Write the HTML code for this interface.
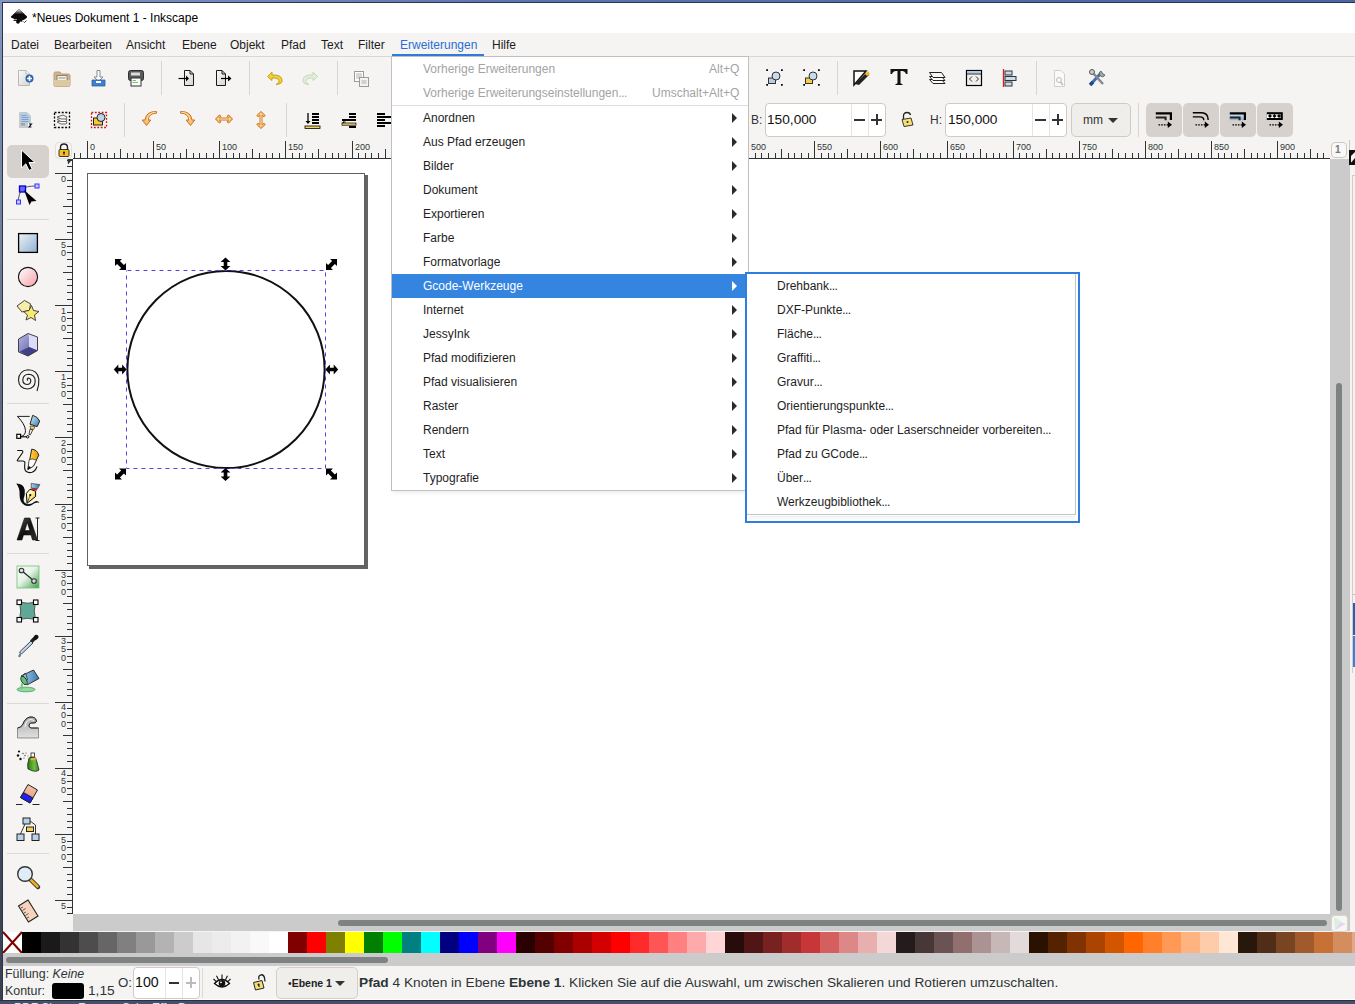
<!DOCTYPE html><html><head><meta charset="utf-8"><style>
*{margin:0;padding:0;box-sizing:border-box}
html,body{width:1355px;height:1004px;overflow:hidden;background:linear-gradient(#7d92bd,#5a6680 40%,#3b4252);font-family:"Liberation Sans",sans-serif;font-size:12px;color:#000}
.a{position:absolute}
.t{position:absolute;white-space:nowrap;line-height:1}
.mi{position:absolute;top:39px;font-size:12px;color:#1c1c1c;white-space:nowrap;line-height:1}
.sep{position:absolute;width:1px;background:#d8d5d0}
.it{position:absolute;font-size:12px;color:#1e1e1e;white-space:nowrap;line-height:1}
.dis{color:#a3a3a3}
.arr{position:absolute;width:0;height:0;border-top:5px solid transparent;border-bottom:5px solid transparent;border-left:5px solid #2b2b2b}
.sw{position:absolute;top:932px;height:21px;width:19px}
.spin{position:absolute;background:#fff;border:1px solid #cfcac5;border-radius:4px}
.btn{position:absolute;background:#d6d1cc;border-radius:5px}
.rl{position:absolute;font-size:9px;color:#2e3436;line-height:1;white-space:nowrap}
svg{position:absolute;overflow:visible}
</style></head><body>
<div class="a" style="left:0;top:0;width:1355px;height:2px;background:linear-gradient(90deg,#8196c2,#5a74b0 40%,#4a64a4)"></div>
<div class="a" style="left:0;top:0;width:2px;height:1004px;background:linear-gradient(#8196c2,#6a7890 30%,#4a5468 60%,#3a4250)"></div>
<div class="a" style="left:2px;top:2px;width:1353px;height:997px;background:#2c3448"></div>
<div class="a" style="left:3px;top:3px;width:1352px;height:996px;background:#f5f4f2"></div>
<div class="a" style="left:3px;top:3px;width:1352px;height:30px;background:#fff"></div>
<div class="t" style="left:32px;top:12px;font-size:12px;color:#000">*Neues Dokument 1 - Inkscape</div>
<div class="a" style="left:3px;top:56px;width:1352px;height:1px;background:#d9d7d3"></div>
<div class="mi" style="left:11px">Datei</div>
<div class="mi" style="left:54px">Bearbeiten</div>
<div class="mi" style="left:126px">Ansicht</div>
<div class="mi" style="left:182px">Ebene</div>
<div class="mi" style="left:230px">Objekt</div>
<div class="mi" style="left:281px">Pfad</div>
<div class="mi" style="left:321px">Text</div>
<div class="mi" style="left:358px">Filter</div>
<div class="mi" style="left:492px">Hilfe</div>
<div class="mi" style="left:400px;color:#2a6fd6">Erweiterungen</div>
<div class="a" style="left:392px;top:54px;width:92px;height:3px;background:#2e7bd8"></div>
<div class="sep" style="left:161px;top:61px;height:34px"></div>
<div class="sep" style="left:249px;top:61px;height:34px"></div>
<div class="sep" style="left:337px;top:61px;height:34px"></div>
<div class="sep" style="left:837px;top:61px;height:34px"></div>
<div class="sep" style="left:1036px;top:61px;height:34px"></div>
<div class="sep" style="left:124px;top:103px;height:34px"></div>
<div class="sep" style="left:286px;top:103px;height:34px"></div>
<div class="sep" style="left:1138px;top:103px;height:34px"></div>
<div class="sep" style="left:3px;top:98px;width:0"></div>
<div class="a" style="left:73px;top:159px;width:1257px;height:755px;background:#fff"></div>
<div class="a" style="left:89px;top:175px;width:279px;height:394px;background:#646464"></div>
<div class="a" style="left:87px;top:173px;width:278px;height:393px;background:#fff;border:1px solid #616161"></div>
<div class="a" style="left:73px;top:140px;width:1257px;height:19px;background:#f5f4f2"></div>
<div class="a" style="left:55px;top:159px;width:18px;height:755px;background:#f5f4f2"></div>
<svg style="left:0;top:0" width="1355" height="1004"><path d="M74.5 153V158M80.5 153V158M87.5 141V158M94.5 153V158M100.5 153V158M107.5 153V158M114.5 153V158M120.5 149V158M127.5 153V158M133.5 153V158M140.5 153V158M147.5 153V158M153.5 141V158M160.5 153V158M166.5 153V158M173.5 153V158M180.5 153V158M186.5 149V158M193.5 153V158M199.5 153V158M206.5 153V158M213.5 153V158M219.5 141V158M226.5 153V158M233.5 153V158M239.5 153V158M246.5 153V158M252.5 149V158M259.5 153V158M266.5 153V158M272.5 153V158M279.5 153V158M285.5 141V158M292.5 153V158M299.5 153V158M305.5 153V158M312.5 153V158M318.5 149V158M325.5 153V158M332.5 153V158M338.5 153V158M345.5 153V158M352.5 141V158M358.5 153V158M365.5 153V158M371.5 153V158M378.5 153V158M385.5 149V158M391.5 153V158M398.5 153V158M404.5 153V158M411.5 153V158M418.5 141V158M424.5 153V158M431.5 153V158M437.5 153V158M444.5 153V158M451.5 149V158M457.5 153V158M464.5 153V158M471.5 153V158M477.5 153V158M484.5 141V158M490.5 153V158M497.5 153V158M504.5 153V158M510.5 153V158M517.5 149V158M523.5 153V158M530.5 153V158M537.5 153V158M543.5 153V158M550.5 141V158M556.5 153V158M563.5 153V158M570.5 153V158M576.5 153V158M583.5 149V158M590.5 153V158M596.5 153V158M603.5 153V158M609.5 153V158M616.5 141V158M623.5 153V158M629.5 153V158M636.5 153V158M642.5 153V158M649.5 149V158M656.5 153V158M662.5 153V158M669.5 153V158M675.5 153V158M682.5 141V158M689.5 153V158M695.5 153V158M702.5 153V158M709.5 153V158M715.5 149V158M722.5 153V158M728.5 153V158M735.5 153V158M742.5 153V158M748.5 141V158M755.5 153V158M761.5 153V158M768.5 153V158M775.5 153V158M781.5 149V158M788.5 153V158M794.5 153V158M801.5 153V158M808.5 153V158M814.5 141V158M821.5 153V158M828.5 153V158M834.5 153V158M841.5 153V158M847.5 149V158M854.5 153V158M861.5 153V158M867.5 153V158M874.5 153V158M880.5 141V158M887.5 153V158M894.5 153V158M900.5 153V158M907.5 153V158M913.5 149V158M920.5 153V158M927.5 153V158M933.5 153V158M940.5 153V158M947.5 141V158M953.5 153V158M960.5 153V158M966.5 153V158M973.5 153V158M980.5 149V158M986.5 153V158M993.5 153V158M999.5 153V158M1006.5 153V158M1013.5 141V158M1019.5 153V158M1026.5 153V158M1032.5 153V158M1039.5 153V158M1046.5 149V158M1052.5 153V158M1059.5 153V158M1066.5 153V158M1072.5 153V158M1079.5 141V158M1085.5 153V158M1092.5 153V158M1099.5 153V158M1105.5 153V158M1112.5 149V158M1118.5 153V158M1125.5 153V158M1132.5 153V158M1138.5 153V158M1145.5 141V158M1151.5 153V158M1158.5 153V158M1165.5 153V158M1171.5 153V158M1178.5 149V158M1185.5 153V158M1191.5 153V158M1198.5 153V158M1204.5 153V158M1211.5 141V158M1218.5 153V158M1224.5 153V158M1231.5 153V158M1237.5 153V158M1244.5 149V158M1251.5 153V158M1257.5 153V158M1264.5 153V158M1270.5 153V158M1277.5 141V158M1284.5 153V158M1290.5 153V158M1297.5 153V158M1304.5 153V158M1310.5 149V158M1317.5 153V158M1323.5 153V158M73 158.5H1330" stroke="#2e3436" stroke-width="1" fill="none"/></svg>
<div class="rl" style="left:90px;top:143px">0</div>
<div class="rl" style="left:156px;top:143px">50</div>
<div class="rl" style="left:222px;top:143px">100</div>
<div class="rl" style="left:288px;top:143px">150</div>
<div class="rl" style="left:355px;top:143px">200</div>
<div class="rl" style="left:421px;top:143px">250</div>
<div class="rl" style="left:487px;top:143px">300</div>
<div class="rl" style="left:553px;top:143px">350</div>
<div class="rl" style="left:619px;top:143px">400</div>
<div class="rl" style="left:685px;top:143px">450</div>
<div class="rl" style="left:751px;top:143px">500</div>
<div class="rl" style="left:817px;top:143px">550</div>
<div class="rl" style="left:883px;top:143px">600</div>
<div class="rl" style="left:950px;top:143px">650</div>
<div class="rl" style="left:1016px;top:143px">700</div>
<div class="rl" style="left:1082px;top:143px">750</div>
<div class="rl" style="left:1148px;top:143px">800</div>
<div class="rl" style="left:1214px;top:143px">850</div>
<div class="rl" style="left:1280px;top:143px">900</div>
<svg style="left:0;top:0" width="1355" height="1004"><path d="M67 160.5H72M67 166.5H72M55 173.5H72M67 180.5H72M67 186.5H72M67 193.5H72M67 199.5H72M63 206.5H72M67 213.5H72M67 219.5H72M67 226.5H72M67 232.5H72M55 239.5H72M67 246.5H72M67 252.5H72M67 259.5H72M67 266.5H72M63 272.5H72M67 279.5H72M67 285.5H72M67 292.5H72M67 299.5H72M55 305.5H72M67 312.5H72M67 318.5H72M67 325.5H72M67 332.5H72M63 338.5H72M67 345.5H72M67 351.5H72M67 358.5H72M67 365.5H72M55 371.5H72M67 378.5H72M67 385.5H72M67 391.5H72M67 398.5H72M63 404.5H72M67 411.5H72M67 418.5H72M67 424.5H72M67 431.5H72M55 437.5H72M67 444.5H72M67 451.5H72M67 457.5H72M67 464.5H72M63 470.5H72M67 477.5H72M67 484.5H72M67 490.5H72M67 497.5H72M55 504.5H72M67 510.5H72M67 517.5H72M67 523.5H72M67 530.5H72M63 537.5H72M67 543.5H72M67 550.5H72M67 556.5H72M67 563.5H72M55 570.5H72M67 576.5H72M67 583.5H72M67 589.5H72M67 596.5H72M63 603.5H72M67 609.5H72M67 616.5H72M67 623.5H72M67 629.5H72M55 636.5H72M67 642.5H72M67 649.5H72M67 656.5H72M67 662.5H72M63 669.5H72M67 675.5H72M67 682.5H72M67 689.5H72M67 695.5H72M55 702.5H72M67 708.5H72M67 715.5H72M67 722.5H72M67 728.5H72M63 735.5H72M67 742.5H72M67 748.5H72M67 755.5H72M67 761.5H72M55 768.5H72M67 775.5H72M67 781.5H72M67 788.5H72M67 794.5H72M63 801.5H72M67 808.5H72M67 814.5H72M67 821.5H72M67 827.5H72M55 834.5H72M67 841.5H72M67 847.5H72M67 854.5H72M67 861.5H72M63 867.5H72M67 874.5H72M67 880.5H72M67 887.5H72M67 894.5H72M55 900.5H72M67 907.5H72M67 913.5H72M72.5 159V914" stroke="#2e3436" stroke-width="1" fill="none"/></svg>
<div class="rl" style="left:61px;top:175.0px;font-size:9px;line-height:8px">0</div>
<div class="rl" style="left:61px;top:241.0px;font-size:9px;line-height:8px">5</div>
<div class="rl" style="left:61px;top:249.4px;font-size:9px;line-height:8px">0</div>
<div class="rl" style="left:61px;top:307.0px;font-size:9px;line-height:8px">1</div>
<div class="rl" style="left:61px;top:315.4px;font-size:9px;line-height:8px">0</div>
<div class="rl" style="left:61px;top:323.8px;font-size:9px;line-height:8px">0</div>
<div class="rl" style="left:61px;top:373.0px;font-size:9px;line-height:8px">1</div>
<div class="rl" style="left:61px;top:381.4px;font-size:9px;line-height:8px">5</div>
<div class="rl" style="left:61px;top:389.8px;font-size:9px;line-height:8px">0</div>
<div class="rl" style="left:61px;top:439.0px;font-size:9px;line-height:8px">2</div>
<div class="rl" style="left:61px;top:447.4px;font-size:9px;line-height:8px">0</div>
<div class="rl" style="left:61px;top:455.8px;font-size:9px;line-height:8px">0</div>
<div class="rl" style="left:61px;top:505.0px;font-size:9px;line-height:8px">2</div>
<div class="rl" style="left:61px;top:513.4px;font-size:9px;line-height:8px">5</div>
<div class="rl" style="left:61px;top:521.8px;font-size:9px;line-height:8px">0</div>
<div class="rl" style="left:61px;top:571.0px;font-size:9px;line-height:8px">3</div>
<div class="rl" style="left:61px;top:579.4px;font-size:9px;line-height:8px">0</div>
<div class="rl" style="left:61px;top:587.8px;font-size:9px;line-height:8px">0</div>
<div class="rl" style="left:61px;top:637.0px;font-size:9px;line-height:8px">3</div>
<div class="rl" style="left:61px;top:645.4px;font-size:9px;line-height:8px">5</div>
<div class="rl" style="left:61px;top:653.8px;font-size:9px;line-height:8px">0</div>
<div class="rl" style="left:61px;top:703.0px;font-size:9px;line-height:8px">4</div>
<div class="rl" style="left:61px;top:711.4px;font-size:9px;line-height:8px">0</div>
<div class="rl" style="left:61px;top:719.8px;font-size:9px;line-height:8px">0</div>
<div class="rl" style="left:61px;top:769.0px;font-size:9px;line-height:8px">4</div>
<div class="rl" style="left:61px;top:777.4px;font-size:9px;line-height:8px">5</div>
<div class="rl" style="left:61px;top:785.8px;font-size:9px;line-height:8px">0</div>
<div class="rl" style="left:61px;top:836.0px;font-size:9px;line-height:8px">5</div>
<div class="rl" style="left:61px;top:844.4px;font-size:9px;line-height:8px">0</div>
<div class="rl" style="left:61px;top:852.8px;font-size:9px;line-height:8px">0</div>
<div class="rl" style="left:61px;top:902.0px;font-size:9px;line-height:8px">5</div>
<div class="a" style="left:73px;top:914px;width:1257px;height:17px;background:#cbcbcb"></div>
<div class="a" style="left:338px;top:920px;width:989px;height:6px;background:#7e8283;border-radius:3px"></div>
<div class="a" style="left:1330px;top:159px;width:19px;height:772px;background:#cbcbcb"></div>
<div class="a" style="left:1336px;top:383px;width:6px;height:528px;background:#7e8283;border-radius:3px"></div>
<div class="a" style="left:1330px;top:140px;width:19px;height:19px;background:#f5f4f2"></div>
<div class="a" style="left:1331px;top:142px;width:16px;height:16px;background:#f8f8f7;border:1px solid #cdc8c3;border-radius:4px"></div>
<div class="t" style="left:1335px;top:145px;font-size:10px;color:#777;font-weight:bold">1</div>
<div class="a" style="left:1349px;top:140px;width:6px;height:791px;background:#f5f4f2;border-left:1px solid #cdc8c3"></div>
<svg style="left:1349px;top:150px" width="6" height="16" viewBox="0 0 6 16"><path d="M0 0H6V2L2 6V15H0Z" fill="#111"/><path d="M6 8V15H0Z" fill="#111"/></svg>
<div class="a" style="left:1352px;top:175px;width:3px;height:498px;border-left:1px solid #d0ccc8;border-top:1px solid #d0ccc8"></div>
<div class="a" style="left:1353px;top:594px;width:2px;height:1px;background:#bbb"></div>
<div class="a" style="left:1353px;top:603px;width:2px;height:32px;background:#2a5fb0"></div>
<div class="a" style="left:1353px;top:636px;width:2px;height:31px;background:#3b7fd8"></div>
<svg style="left:1331px;top:915px" width="17" height="17" viewBox="0 0 17 17"><rect x="0.5" y="0.5" width="16" height="16" rx="3" fill="#f7f6f4" stroke="#d8d3ce"/><path d="M3 2L14.5 9L4 15Z" fill="#d8f0e0"/><path d="M4 15L14.5 9L9 8Z" fill="#f0d0f0"/></svg>
<div class="a" style="left:3px;top:932px;width:19px;height:21px;background:#fff"></div>
<svg style="left:3px;top:932px" width="19" height="21"><path d="M0 0L19 21M19 0L0 21" stroke="#800000" stroke-width="2"/></svg>
<div class="sw" style="left:22px;background:#000000"></div>
<div class="sw" style="left:41px;background:#1a1a1a"></div>
<div class="sw" style="left:60px;background:#333333"></div>
<div class="sw" style="left:79px;background:#4d4d4d"></div>
<div class="sw" style="left:98px;background:#666666"></div>
<div class="sw" style="left:117px;background:#808080"></div>
<div class="sw" style="left:136px;background:#999999"></div>
<div class="sw" style="left:155px;background:#b3b3b3"></div>
<div class="sw" style="left:174px;background:#cccccc"></div>
<div class="sw" style="left:193px;background:#e6e6e6"></div>
<div class="sw" style="left:212px;background:#ececec"></div>
<div class="sw" style="left:231px;background:#f2f2f2"></div>
<div class="sw" style="left:250px;background:#f9f9f9"></div>
<div class="sw" style="left:269px;background:#ffffff"></div>
<div class="sw" style="left:288px;background:#800000"></div>
<div class="sw" style="left:307px;background:#ff0000"></div>
<div class="sw" style="left:326px;background:#808000"></div>
<div class="sw" style="left:345px;background:#ffff00"></div>
<div class="sw" style="left:364px;background:#008000"></div>
<div class="sw" style="left:383px;background:#00ff00"></div>
<div class="sw" style="left:402px;background:#008080"></div>
<div class="sw" style="left:421px;background:#00ffff"></div>
<div class="sw" style="left:440px;background:#000080"></div>
<div class="sw" style="left:459px;background:#0000ff"></div>
<div class="sw" style="left:478px;background:#800080"></div>
<div class="sw" style="left:497px;background:#ff00ff"></div>
<div class="sw" style="left:516px;background:#2b0000"></div>
<div class="sw" style="left:535px;background:#550000"></div>
<div class="sw" style="left:554px;background:#800000"></div>
<div class="sw" style="left:573px;background:#aa0000"></div>
<div class="sw" style="left:592px;background:#d40000"></div>
<div class="sw" style="left:611px;background:#ff0000"></div>
<div class="sw" style="left:630px;background:#ff2a2a"></div>
<div class="sw" style="left:649px;background:#ff5555"></div>
<div class="sw" style="left:668px;background:#ff8080"></div>
<div class="sw" style="left:687px;background:#ffaaaa"></div>
<div class="sw" style="left:706px;background:#ffd5d5"></div>
<div class="sw" style="left:725px;background:#280b0b"></div>
<div class="sw" style="left:744px;background:#501616"></div>
<div class="sw" style="left:763px;background:#782121"></div>
<div class="sw" style="left:782px;background:#a02c2c"></div>
<div class="sw" style="left:801px;background:#c83737"></div>
<div class="sw" style="left:820px;background:#d35f5f"></div>
<div class="sw" style="left:839px;background:#de8787"></div>
<div class="sw" style="left:858px;background:#e9afaf"></div>
<div class="sw" style="left:877px;background:#f4d7d7"></div>
<div class="sw" style="left:896px;background:#241c1c"></div>
<div class="sw" style="left:915px;background:#483737"></div>
<div class="sw" style="left:934px;background:#6c5353"></div>
<div class="sw" style="left:953px;background:#916f6f"></div>
<div class="sw" style="left:972px;background:#ac9393"></div>
<div class="sw" style="left:991px;background:#c8b7b7"></div>
<div class="sw" style="left:1010px;background:#e3dbdb"></div>
<div class="sw" style="left:1029px;background:#2b1100"></div>
<div class="sw" style="left:1048px;background:#552200"></div>
<div class="sw" style="left:1067px;background:#803300"></div>
<div class="sw" style="left:1086px;background:#aa4400"></div>
<div class="sw" style="left:1105px;background:#d45500"></div>
<div class="sw" style="left:1124px;background:#ff6600"></div>
<div class="sw" style="left:1143px;background:#ff7f2a"></div>
<div class="sw" style="left:1162px;background:#ff9955"></div>
<div class="sw" style="left:1181px;background:#ffb380"></div>
<div class="sw" style="left:1200px;background:#ffccaa"></div>
<div class="sw" style="left:1219px;background:#ffe6d5"></div>
<div class="sw" style="left:1238px;background:#28170b"></div>
<div class="sw" style="left:1257px;background:#502d16"></div>
<div class="sw" style="left:1276px;background:#784421"></div>
<div class="sw" style="left:1295px;background:#a05a2c"></div>
<div class="sw" style="left:1314px;background:#c87137"></div>
<div class="sw" style="left:1333px;background:#d38d5f"></div>
<div class="sw" style="left:1352px;background:#deaa87"></div>
<div class="a" style="left:3px;top:953px;width:1352px;height:13px;background:#cbcbcb"></div>
<div class="a" style="left:6px;top:957px;width:382px;height:6px;background:#7e8283;border-radius:3px"></div>
<div class="a" style="left:3px;top:966px;width:1352px;height:33px;background:#f5f4f2"></div>
<div class="a" style="left:3px;top:999px;width:1352px;height:1px;background:#fff"></div>
<div class="a" style="left:0;top:1000px;width:1355px;height:1px;background:#2a3040"></div>
<div class="a" style="left:0;top:1001px;width:1355px;height:3px;background:#46506a"></div>
<div class="a" style="left:0;top:1001px;width:260px;height:3px;overflow:hidden"><div class="t" style="left:14px;top:1px;font-size:12px;color:#dde3ee">PDF Sh</div><div class="t" style="left:78px;top:1px;font-size:12px;color:#dde3ee">F</div><div class="t" style="left:122px;top:1px;font-size:12px;color:#dde3ee">Sch</div><div class="t" style="left:152px;top:1px;font-size:12px;color:#dde3ee">Eff</div><div class="t" style="left:178px;top:1px;font-size:12px;color:#dde3ee">Bau</div></div>
<svg style="left:0;top:0" width="0" height="0"><defs><linearGradient id="gb" x1="0" y1="0" x2="1" y2="1"><stop offset="0" stop-color="#eef3f8"/><stop offset="1" stop-color="#8fb0d2"/></linearGradient><linearGradient id="gp" x1="0" y1="0" x2="1" y2="1"><stop offset="0" stop-color="#fff"/><stop offset="1" stop-color="#f5a0a8"/></linearGradient><linearGradient id="gg" x1="0" y1="0" x2="1" y2="1"><stop offset="0" stop-color="#3c9f4a"/><stop offset="1" stop-color="#e8f4e8"/></linearGradient><linearGradient id="gw" x1="0" y1="0" x2="0" y2="1"><stop offset="0" stop-color="#fff"/><stop offset="1" stop-color="#a0a0a0"/></linearGradient><linearGradient id="gpg" x1="0" y1="0" x2="1" y2="1"><stop offset="0" stop-color="#fbfbfb"/><stop offset="1" stop-color="#d4d4d0"/></linearGradient></defs></svg>
<svg style="left:17px;top:69px" width="20" height="20" viewBox="0 0 20 20"><path d="M1.5 1.5H9L12.5 5V16.5H1.5Z" fill="url(#gpg)" stroke="#b8b8b4"/><path d="M9 1.5V5H12.5" fill="#fff" stroke="#b8b8b4"/><circle cx="12.5" cy="9.5" r="4" fill="#2d64b4"/><path d="M12.5 7V12M10 9.5H15" stroke="#fff" stroke-width="1.6"/></svg>
<svg style="left:53px;top:70px" width="20" height="20" viewBox="0 0 20 20"><path d="M1 3.5Q1 2 2.5 2H7L8.5 4H15Q17 4 17 5.5V15Q17 16.5 15.5 16.5H2.5Q1 16.5 1 15Z" fill="#cdb690" stroke="#b89f78"/><rect x="4" y="5.5" width="10" height="6" fill="#f4f1ea" stroke="#7c6f5a" stroke-width=".8"/><path d="M5.5 8H12.5" stroke="#9a9080"/><path d="M1 10H17V15.5Q17 16.5 16 16.5H2Q1 16.5 1 15.5Z" fill="#ddc8a4"/></svg>
<svg style="left:90px;top:69px" width="20" height="20" viewBox="0 0 20 20"><path d="M7 1.5H10V8H13L8.5 12.5L4 8H7Z" fill="#fff" stroke="#8a8a8a"/><path d="M2 11H15V17H2Z" fill="#3f7fd0" stroke="#2d61a8" stroke-width=".8"/><rect x="6" y="12" width="5" height="2" fill="#fff"/></svg>
<svg style="left:127px;top:69px" width="20" height="20" viewBox="0 0 20 20"><rect x="1.5" y="1.5" width="15" height="10" rx="2" fill="#5a5c5c" stroke="#2e3030"/><rect x="4" y="3.5" width="9" height="3" fill="#ddd"/><rect x="4" y="9" width="10" height="8" fill="#fff" stroke="#2e3030"/><path d="M5.5 11.5H9M5.5 13.5H11" stroke="#7abf6a"/></svg>
<svg style="left:178px;top:69px" width="20" height="20" viewBox="0 0 20 20"><path d="M6.5 1.5H12L15.5 5V16.5H6.5Z" fill="url(#gpg)" stroke="#1a1a1a"/><path d="M12 1.5V5H15.5" fill="none" stroke="#1a1a1a"/><path d="M0.5 9.5H10" stroke="#000" stroke-width="1.2"/><path d="M8 6.5L11 9.5L8 12.5Z" fill="#000"/></svg>
<svg style="left:215px;top:69px" width="20" height="20" viewBox="0 0 20 20"><path d="M1.5 1.5H7L10.5 5V16.5H1.5Z" fill="url(#gpg)" stroke="#1a1a1a"/><path d="M7 1.5V5H10.5" fill="none" stroke="#1a1a1a"/><path d="M6 9.5H14" stroke="#000" stroke-width="1.2"/><path d="M13 6.5L16.5 9.5L13 12.5Z" fill="#000"/></svg>
<svg style="left:265px;top:69px" width="20" height="20" viewBox="0 0 20 20"><path d="M7 3L2.5 7.5L7 11.5V9Q13 8.5 14 11.5Q15 14 11 15.5Q18 15 17 10.5Q16 5.5 7 6Z" fill="#f0d040" stroke="#c8a010" stroke-width="1"/></svg>
<svg style="left:302px;top:69px" width="20" height="20" viewBox="0 0 20 20"><path d="M11 3L15.5 7.5L11 11.5V9Q5 8.5 4 11.5Q3 14 7 15.5Q0 15 1 10.5Q2 5.5 11 6Z" fill="#e4eedc" stroke="#c4d8b8" stroke-width="1"/></svg>
<svg style="left:353px;top:70px" width="20" height="20" viewBox="0 0 20 20"><rect x="1.5" y="1.5" width="9" height="10" fill="#fff" stroke="#9a9a9a"/><path d="M3 4H9M3 6H9M3 8H8" stroke="#9a9a9a" stroke-width=".8"/><rect x="6.5" y="7.5" width="9" height="9" fill="#f3f3f3" stroke="#9a9a9a"/><path d="M8.5 11H13.5M8.5 13H13.5" stroke="#9a9a9a" stroke-width=".8"/></svg>
<svg style="left:765px;top:68px" width="20" height="20" viewBox="0 0 20 20"><path d="M2 3V2H3M2 16V17H3M16 2H17V3M17 16V17H16" stroke="#000" stroke-width="1.5"/><rect x="3.5" y="10" width="7" height="5.5" fill="#b8cde4" stroke="#333"/><circle cx="11" cy="8" r="4" fill="#c9dcee" stroke="#333" stroke-width="1"/></svg>
<svg style="left:802px;top:68px" width="20" height="20" viewBox="0 0 20 20"><path d="M2 3V2H3M2 16V17H3M16 2H17V3M17 16V17H16" stroke="#000" stroke-width="1.5"/><rect x="3.5" y="10" width="7" height="5.5" fill="#f4d03e" stroke="#333"/><circle cx="11" cy="8" r="4" fill="#c9dcee" stroke="#333" stroke-width="1"/></svg>
<svg style="left:852px;top:68px" width="20" height="20" viewBox="0 0 20 20"><path d="M2 17V3H14L2 17Z" fill="#fff" stroke="#111" stroke-width="1.5"/><path d="M3 16L14 5L17 7L7 17Z" fill="#222"/><path d="M13 6L16 3L18 6L15 8Z" fill="#f4b81e"/></svg>
<svg style="left:889px;top:67px" width="20" height="20" viewBox="0 0 20 20"><path d="M1.5 2H18.5V7H17Q16 4 13 4H11.5V16Q11.5 17 13.5 17V18H6.5V17Q8.5 17 8.5 16V4H7Q4 4 3 7H1.5Z" fill="#111"/></svg>
<svg style="left:926px;top:68px" width="20" height="20" viewBox="0 0 20 20"><path d="M3.5 11.5L7 15.5H19L15.5 11.5Z" fill="#fff" stroke="#222" stroke-width="1"/><path d="M3.5 8.5L7 12.5H19L15.5 8.5Z" fill="#fff" stroke="#222" stroke-width="1"/><path d="M3.5 4.5L7 9.5H19L15.5 4.5Z" fill="#f6f6f6" stroke="#222" stroke-width="1"/></svg>
<svg style="left:963px;top:68px" width="20" height="20" viewBox="0 0 20 20"><rect x="3.5" y="2.5" width="15" height="15" fill="#f0efea" stroke="#000" stroke-width="1.2"/><rect x="4.2" y="3.2" width="13.6" height="2.3" fill="#a8c8ec"/><path d="M4 6H18" stroke="#000" stroke-width=".8"/><path d="M9 8.5L6.5 11L9 13.5M13 8.5L15.5 11L13 13.5" fill="none" stroke="#333" stroke-width="1"/></svg>
<svg style="left:1000px;top:68px" width="20" height="20" viewBox="0 0 20 20"><path d="M3.5 1V19" stroke="#d02020" stroke-width="1.3"/><rect x="5" y="3" width="7" height="4" fill="#c9dcee" stroke="#333"/><rect x="5" y="8.5" width="11" height="4" fill="#c9dcee" stroke="#333"/><rect x="5" y="14" width="7" height="4" fill="#c9dcee" stroke="#333"/></svg>
<svg style="left:1051px;top:69px" width="20" height="20" viewBox="0 0 20 20"><path d="M3.5 1.5H10L13.5 5V17.5H3.5Z" fill="#fafafa" stroke="#cfcfcf"/><circle cx="8" cy="11" r="2.5" fill="none" stroke="#bbb"/><path d="M9.5 13L12 16" stroke="#bbb" stroke-width="1.5"/></svg>
<svg style="left:1088px;top:68px" width="20" height="20" viewBox="0 0 20 20"><path d="M3 16L13 5" stroke="#3a70b8" stroke-width="3"/><path d="M13 3A3 3 0 1 0 17 7L15 6Z" fill="#9aa" stroke="#555" stroke-width=".8"/><path d="M4 4L15 16" stroke="#888" stroke-width="2.5"/><circle cx="4" cy="4" r="2.5" fill="#ccc" stroke="#555"/><path d="M2 17L5 14" stroke="#1e4a90" stroke-width="3.5"/></svg>
<svg style="left:17px;top:111px" width="20" height="20" viewBox="0 0 20 20"><path d="M2.5 1.5H10L13.5 5V16.5H2.5Z" fill="#b6cde6" stroke="#c9c9c9"/><path d="M4.5 4.5H9.5M4.5 6.5H11.5M4.5 8.5H11.5M4.5 10.5H11.5" stroke="#7c9cc4" stroke-width=".9"/><rect x="4" y="12" width="4" height="2.5" fill="#b89f78"/><rect x="11" y="12" width="4" height="5" fill="#fff"/><path d="M12 13H14.5L12 16H14.5" stroke="#000" stroke-width="1.1" fill="none"/></svg>
<svg style="left:53px;top:111px" width="20" height="20" viewBox="0 0 20 20"><rect x="1.5" y="1.5" width="15" height="15" fill="none" stroke="#000" stroke-dasharray="2 1.6" stroke-width="1.3"/><path d="M4 11L8 13H13L14 11L10 9Z" fill="#fff" stroke="#555" stroke-width=".9"/><path d="M4 8.5L8 10.5H13L14 8.5L10 6.5Z" fill="#fff" stroke="#555" stroke-width=".9"/><path d="M4 6L8 8H13L14 6L10 4Z" fill="#f3f3f3" stroke="#555" stroke-width=".9"/></svg>
<svg style="left:90px;top:111px" width="20" height="20" viewBox="0 0 20 20"><rect x="1.5" y="1.5" width="15" height="15" fill="none" stroke="#d01010" stroke-dasharray="1.8 1.6" stroke-width="1.3"/><rect x="3.5" y="7" width="9" height="7" fill="#f5c830" stroke="#222"/><circle cx="11" cy="6.5" r="4" fill="#bcd3ea" stroke="#222"/></svg>
<svg style="left:140px;top:110px" width="20" height="20" viewBox="0 0 20 20"><path d="M16.5 3.2Q9 3 8 10H10.8L6.5 15.5L2.2 10H5Q6 1.2 16.5 1.5Z" fill="#f8c070" stroke="#c8680c" stroke-width=".9" stroke-linejoin="round"/><path d="M15.5 2.3Q8 2.2 7 10.5" fill="none" stroke="#fff4d8" stroke-width=".7"/></svg>
<svg style="left:177px;top:110px" width="20" height="20" viewBox="0 0 20 20"><path d="M3.5 3.2Q11 3 12 10H9.2L13.5 15.5L17.8 10H15Q14 1.2 3.5 1.5Z" fill="#f8c070" stroke="#c8680c" stroke-width=".9" stroke-linejoin="round"/><path d="M4.5 2.3Q12 2.2 13 10.5" fill="none" stroke="#fff4d8" stroke-width=".7"/></svg>
<svg style="left:214px;top:110px" width="20" height="20" viewBox="0 0 20 20"><path d="M1.5 9L5.5 4.8L7 6.3L5.2 8H14.8L13 6.3L14.5 4.8L18.5 9L14.5 13.2L13 11.7L14.8 10H5.2L7 11.7L5.5 13.2Z" fill="#f8c070" stroke="#c8680c" stroke-width=".9" stroke-linejoin="round"/><path d="M4 9H16" stroke="#fff4d8" stroke-width=".7"/></svg>
<svg style="left:252px;top:110px" width="20" height="20" viewBox="0 0 20 20"><path d="M9 1.5L13.2 5.5L11.7 7L10 5.2V14.8L11.7 13L13.2 14.5L9 18.5L4.8 14.5L6.3 13L8 14.8V5.2L6.3 7L4.8 5.5Z" fill="#f8c070" stroke="#c8680c" stroke-width=".9" stroke-linejoin="round"/><path d="M9 3V16" stroke="#fff4d8" stroke-width=".7"/></svg>
<svg style="left:303px;top:111px" width="20" height="20" viewBox="0 0 20 20"><path d="M5 2V12" stroke="#000" stroke-width="1.3"/><path d="M2.5 10L5 13L7.5 10Z" fill="#000"/><path d="M9 3H16M9 6H16M9 9H16M9 12H16" stroke="#000" stroke-width="2"/><rect x="2" y="15" width="15" height="2.5" fill="#f4d060" stroke="#000" stroke-width=".8"/></svg>
<svg style="left:340px;top:111px" width="20" height="20" viewBox="0 0 20 20"><path d="M9 3H16M9 6H16M2 9H16M9 16H16" stroke="#000" stroke-width="2"/><path d="M3 11L6 14M3 11V13.5M3 11H5.5" stroke="#000" stroke-width="1"/><rect x="2" y="12" width="14" height="2.2" fill="#f4d060" stroke="#000" stroke-width=".7"/></svg>
<svg style="left:376px;top:111px" width="16" height="20" viewBox="0 0 16 20"><path d="M1 3H9M1 6H15M1 9H9M1 12H15M1 15H9" stroke="#000" stroke-width="2"/></svg>
<svg style="left:10px;top:8px" width="18" height="18" viewBox="0 0 18 18"><defs><linearGradient id="glg" x1="0" y1="0" x2="0" y2="1"><stop offset="0" stop-color="#fff"/><stop offset=".5" stop-color="#777"/><stop offset="1" stop-color="#000"/></linearGradient></defs><path d="M9 1L1 8.5Q0.5 9.3 1.5 9.8L4.5 11Q3 12 3.5 12.8L6.5 13Q5.5 14.2 6.5 15Q8 16.3 9.5 15L10 13.5L12.5 13.8L12 12.5L14.5 11.5Q16 10.5 17 9.5Q17.5 8.7 16.5 8Z" fill="#0a0a0a"/><path d="M9 1.3L3.5 6.5Q6 5.5 9 6.5Q12 5.5 14.5 6.5Z" fill="url(#glg)"/><path d="M13.5 13.5L14.5 14.5L16.5 12.5" fill="none" stroke="#222" stroke-width=".9"/><path d="M3 11.5H7" stroke="#fff" stroke-width=".6"/></svg>
<div class="a" style="left:7px;top:145px;width:42px;height:33px;background:#d6d1cc;border-radius:5px"></div>
<div class="a" style="left:7px;top:219px;width:42px;height:1px;background:#dcd8d3"></div>
<div class="a" style="left:7px;top:403px;width:42px;height:1px;background:#dcd8d3"></div>
<div class="a" style="left:7px;top:553px;width:42px;height:1px;background:#dcd8d3"></div>
<div class="a" style="left:7px;top:703px;width:42px;height:1px;background:#dcd8d3"></div>
<div class="a" style="left:7px;top:853px;width:42px;height:1px;background:#dcd8d3"></div>
<svg style="left:0;top:0" width="0" height="0"><defs><linearGradient id="g3a" x1="0" y1="0" x2="1" y2="1"><stop offset="0" stop-color="#b8b8e8"/><stop offset="1" stop-color="#50509a"/></linearGradient><linearGradient id="gtx" x1="0" y1="0" x2="1" y2="1"><stop offset="0" stop-color="#555"/><stop offset=".5" stop-color="#111"/><stop offset="1" stop-color="#333"/></linearGradient><linearGradient id="gtw" x1="0" y1="0" x2="0" y2="1"><stop offset="0" stop-color="#aaa"/><stop offset="1" stop-color="#e0e0e0"/></linearGradient><linearGradient id="ggr" x1="0" y1="0" x2="1" y2="1"><stop offset="0" stop-color="#f8fcf8"/><stop offset=".45" stop-color="#e8f4e8"/><stop offset="1" stop-color="#40a050"/></linearGradient><linearGradient id="gbk" x1="0" y1="0" x2="1" y2="0"><stop offset="0" stop-color="#a8d4f0"/><stop offset="1" stop-color="#3a78b0"/></linearGradient><linearGradient id="ger" x1="0" y1="0" x2="0" y2="1"><stop offset="0" stop-color="#f8c8b0"/><stop offset="1" stop-color="#e09070"/></linearGradient><linearGradient id="gsp" x1="0" y1="0" x2="1" y2="0"><stop offset="0" stop-color="#2a7a10"/><stop offset=".6" stop-color="#70c040"/><stop offset="1" stop-color="#3a8a20"/></linearGradient></defs></svg>
<svg style="left:16px;top:149px" width="24" height="24" viewBox="0 0 24 24"><path d="M5.5 1L5.5 19L9.8 14.8L13 21.5L16.2 20L13 13.5H19Z" fill="#000" stroke="#fff" stroke-width="1" stroke-linejoin="round"/></svg>
<svg style="left:16px;top:183px" width="24" height="24" viewBox="0 0 24 24"><path d="M2 18Q3 10 6 6Q10 3 20 3" fill="none" stroke="#444" stroke-width=".9"/><rect x=".5" y="17" width="4" height="4" fill="#c8c8ff" stroke="#3030ff" stroke-width="1"/><rect x="19" y="1" width="4" height="4" fill="#c8c8ff" stroke="#3030ff" stroke-width="1"/><rect x="3.5" y="3" width="6" height="6" fill="#6a6af0" stroke="#0000e0" stroke-width="1.3"/><path d="M8 7L20.5 18L15.5 18.5L13.5 22Z" fill="#000"/></svg>
<svg style="left:16px;top:231px" width="24" height="24" viewBox="0 0 24 24"><rect x="2.6" y="2.6" width="18.8" height="18.8" fill="url(#gb)" stroke="#000" stroke-width="1.3"/></svg>
<svg style="left:16px;top:265px" width="24" height="24" viewBox="0 0 24 24"><circle cx="12" cy="12" r="9.6" fill="url(#gp)" stroke="#111" stroke-width="1.1"/></svg>
<svg style="left:16px;top:299px" width="24" height="24" viewBox="0 0 24 24"><path d="M8.5 1.5L14.5 4.8L13.5 11.5L6 13L1 7Z" fill="#f6eea8" stroke="#333" stroke-width=".9"/><path d="M15.5 6.5L17.5 11.5L23 12.5L18.5 16L19.5 21.5L15 18.5L10 21L11.5 16L7.5 12.5L13 11.5Z" fill="#f8ea70" stroke="#333" stroke-width=".9"/></svg>
<svg style="left:16px;top:333px" width="24" height="24" viewBox="0 0 24 24"><path d="M12 0.5L21.5 4V17.5L12 23L2.5 19V6Z" fill="url(#g3a)"/><path d="M12 0.5L21.5 4V17.5L13 14L13 4.5Z" fill="#dcdcf8"/><path d="M4 18.5L13 14L21.5 17.5L12 23Z" fill="#40408a"/><path d="M12 0.5L21.5 4V17.5L12 23L2.5 19V6Z" fill="none" stroke="#333" stroke-width=".9"/></svg>
<svg style="left:16px;top:368px" width="24" height="24" viewBox="0 0 24 24"><path d="M12 12.5Q10.5 11 12 10Q14.8 10 14.8 13Q14.5 16.5 11 16.5Q6.5 16 6.8 11.5Q7.5 6.5 12.5 6.3Q19 6.5 19.2 13Q19 20.5 11.5 21Q3 20.5 2.5 12Q3 2.5 12 1.8Q21.5 2 22.8 11Q23.2 17.5 21 23" fill="none" stroke="#222" stroke-width="1.15"/></svg>
<svg style="left:16px;top:415px" width="24" height="24" viewBox="0 0 24 24"><defs><linearGradient id="gbc" x1="0" y1="0" x2="1" y2="1"><stop offset="0" stop-color="#d8f4fa"/><stop offset="1" stop-color="#3a74b0"/></linearGradient></defs><path d="M1.4 1.4H13.7" stroke="#222" stroke-width="1"/><path d="M1.4 1.4Q9 9 9.5 15.5Q9.5 20.5 5 21.5" fill="none" stroke="#111" stroke-width="1"/><rect x="0.8" y="19.3" width="3.8" height="4" fill="#fff" stroke="#000" stroke-width="1.2"/><path d="M4.6 21.8H11" stroke="#000" stroke-width="1.1"/><circle cx="11.7" cy="21.8" r="1.2" fill="#fff" stroke="#000" stroke-width="1"/><path d="M13 19.5L14 14.3L16.8 14.8L14.3 19.8Z" fill="#fff" stroke="#111" stroke-width=".8"/><path d="M14.2 10.9L19 11.5L17.8 14.3L14.5 14.1Z" fill="#f8d040" stroke="#222" stroke-width=".6"/><path d="M16.7 0.3Q21.5 1.5 23.7 6.1L21.2 11.6L14 9.2Z" fill="url(#gbc)" stroke="#111" stroke-width=".9" stroke-linejoin="round"/></svg>
<svg style="left:16px;top:449px" width="24" height="24" viewBox="0 0 24 24"><defs><linearGradient id="gpc" x1="0" y1="0" x2="1" y2="0"><stop offset="0" stop-color="#f8f040"/><stop offset="1" stop-color="#f09010"/></linearGradient><linearGradient id="gcn" x1="0" y1="0" x2="1" y2="1"><stop offset="0" stop-color="#fff"/><stop offset=".5" stop-color="#fff"/><stop offset="1" stop-color="#f0b020"/></linearGradient></defs><path d="M1.2 1.5H5.5Q7.5 1.8 6.5 3.8L1.3 11.2Q1 12 2.3 12H7Q9.3 12.3 8.8 15Q8 20 10 22.3Q12.5 24.3 16 23.3Q19.5 22 21 17.5" fill="none" stroke="#111" stroke-width="1.1"/><path d="M11.9 20.5L15.7 0.2Q21 0.5 22.8 6.2L17.5 17Z" fill="url(#gpc)" stroke="#111" stroke-width=".9" stroke-linejoin="round"/><path d="M11.9 20.5L13.2 10.5Q17 9 20.3 11.3L17.5 17Z" fill="url(#gcn)" stroke="#222" stroke-width=".7"/><path d="M11.9 20.5L12.4 16.8L15 18.6Z" fill="#000"/></svg>
<svg style="left:16px;top:483px" width="24" height="24" viewBox="0 0 24 24"><defs><linearGradient id="gnb" x1="0" y1="0" x2="1" y2="1"><stop offset="0" stop-color="#fff"/><stop offset=".4" stop-color="#fff4a0"/><stop offset="1" stop-color="#f0b010"/></linearGradient></defs><path d="M0.2 0.4Q8 0.5 8.8 7Q9.2 12 7.6 16Q7.2 20.5 12 21.2Q16.5 21 18.5 18.8Q21.5 17 23.5 19.8Q19.5 19 16.5 21.5Q12.5 24.3 8.2 22Q3.5 19 3.6 12Q4 5 0.2 0.4Z" fill="#0c0c0c"/><path d="M10.4 10.3L14 6.2L19.6 8.2L19.6 13.5L11 20.3Z" fill="url(#gnb)" stroke="#000" stroke-width="1" stroke-linejoin="round"/><circle cx="14.3" cy="12" r="1.1" fill="#000"/><path d="M14.3 12L11.5 19" stroke="#000" stroke-width=".6"/><path d="M15.8 5L21.4 5.8L20.6 7.8L15 6.6Z" fill="#e01818"/><path d="M15.2 0.4L23.8 1.6L21.5 5.8L15.3 5Z" fill="url(#gbk)" stroke="#222" stroke-width=".6"/></svg>
<svg style="left:16px;top:517px" width="24" height="24" viewBox="0 0 24 24"><path d="M1 23L8.5 1H14L21.5 23H16.5L15 18H7.5L6 23ZM8.8 13.5H13.8L11.3 5.5Z" fill="url(#gtx)" stroke="#000" stroke-width=".5"/><path d="M19.5 1H23.5M21.5 1V23.5M19.5 23.5H23.5" stroke="#222" stroke-width="1"/></svg>
<svg style="left:16px;top:565px" width="24" height="24" viewBox="0 0 24 24"><rect x="1" y="1" width="22" height="22" fill="url(#ggr)" stroke="#70c070" stroke-width=".8"/><path d="M5.5 5.5L18 16" stroke="#222" stroke-width="1.1"/><circle cx="5.5" cy="5.5" r="2.3" fill="#ddd" stroke="#333" stroke-width="1.1"/><circle cx="18" cy="16" r="2.3" fill="#ddd" stroke="#333" stroke-width="1.1"/></svg>
<svg style="left:16px;top:599px" width="24" height="24" viewBox="0 0 24 24"><path d="M3.5 3Q12 5.5 19.5 3Q17 12 19.5 20.5Q11 18 3.5 20.5Q6 12 3.5 3Z" fill="#5fa898" stroke="#333" stroke-width=".8"/><rect x="1" y="1" width="4.5" height="4.5" fill="#fff" stroke="#000" stroke-width="1.1"/><rect x="17.5" y="1" width="4.5" height="4.5" fill="#fff" stroke="#000" stroke-width="1.1"/><rect x="1" y="18.5" width="4.5" height="4.5" fill="#fff" stroke="#000" stroke-width="1.1"/><rect x="17.5" y="18.5" width="4.5" height="4.5" fill="#fff" stroke="#000" stroke-width="1.1"/></svg>
<svg style="left:16px;top:633px" width="24" height="24" viewBox="0 0 24 24"><path d="M3.5 19L15 8L17 10L5.5 21Z" fill="#c0d8f0" stroke="#333" stroke-width=".9"/><path d="M14 7.5L16.5 5L19 7.5L16.5 10Z" fill="#222"/><path d="M16 6L19 2Q22 1 22.5 3.5Q23 5.5 19 7.5Z" fill="#111"/><path d="M4 20.5Q2 23 3 24Q5 24 4.5 21Z" fill="#5a9ad0" stroke="#345" stroke-width=".5"/></svg>
<svg style="left:16px;top:668px" width="24" height="24" viewBox="0 0 24 24"><ellipse cx="10" cy="21.5" rx="9" ry="2.3" fill="#90dca0" stroke="#3a9050" stroke-width=".7"/><path d="M5 8L17.5 2L23 10.5L11 17Z" fill="url(#gbk)" stroke="#222" stroke-width=".9"/><ellipse cx="8" cy="12.5" rx="2.5" ry="4.5" transform="rotate(-30 8 12.5)" fill="#60c070" stroke="#222" stroke-width=".8"/><path d="M6.5 15Q5 18 6 21" stroke="#70c880" stroke-width="2" fill="none"/><path d="M7 8Q9 3 10.5 7L11.5 12" fill="none" stroke="#333" stroke-width=".8"/></svg>
<svg style="left:16px;top:715px" width="24" height="24" viewBox="0 0 24 24"><path d="M1.5 13Q5 13 7 9Q9 3 14 2Q19.5 1.5 20.5 6Q20 8.5 17 8Q14 7 13 10Q12.5 12 15 13H22.5V23H1.5Z" fill="url(#gtw)" stroke="#555" stroke-width=".6"/><path d="M1.5 13Q5 13 7 9Q9 3 14 2Q19.5 1.5 20.5 6Q20 8.5 17 8Q14 7 13 10Q12.5 12 15 13H22.5" fill="none" stroke="#222" stroke-width="1"/><path d="M9 12Q10 5 14.5 4.5Q17.5 4.5 18 6" fill="none" stroke="#fff" stroke-width=".9"/></svg>
<svg style="left:16px;top:749px" width="24" height="24" viewBox="0 0 24 24"><path d="M12.5 12Q12 8.5 15 8H18.5Q20 9 20.5 11.5L23 21Q21 23 17 22L12 20Q11 15 12.5 12Z" fill="url(#gsp)" stroke="#222" stroke-width=".8"/><path d="M14.5 9.5L19.5 8.5L20 10.5L15 11.5Z" fill="#f0b030"/><rect x="15" y="4" width="3.5" height="4" fill="#fff" stroke="#222" stroke-width=".8"/><circle cx="3" cy="2.5" r="1.1" fill="#111"/><circle cx="2" cy="6.5" r="1.2" fill="#111"/><circle cx="4.5" cy="10" r="1.2" fill="#111"/><circle cx="7" cy="4.5" r=".7" fill="#444"/><circle cx="9" cy="6.5" r=".7" fill="#444"/><circle cx="10" cy="4" r=".6" fill="#444"/><circle cx="8" cy="9" r=".6" fill="#444"/><circle cx="12" cy="7" r=".6" fill="#777"/></svg>
<svg style="left:16px;top:783px" width="24" height="24" viewBox="0 0 24 24"><path d="M12 1.5L21.5 7L14 20L4.5 14.5Z" fill="url(#ger)" stroke="#222" stroke-width="1"/><path d="M7.5 9.5L17 15L14 20L4.5 14.5Z" fill="#2020f0" stroke="#222" stroke-width="1"/><path d="M0 21.5H6.5M16.5 21.5H23.5" stroke="#222" stroke-width="1.1"/></svg>
<svg style="left:16px;top:817px" width="24" height="24" viewBox="0 0 24 24"><rect x="7" y="1" width="7" height="6" fill="#b8d0e8" stroke="#222" stroke-width="1"/><rect x="10.5" y="10" width="7" height="4.5" fill="#f8d040" stroke="#222" stroke-width="1"/><rect x="1" y="17" width="7" height="6.5" fill="#b8d0e8" stroke="#222" stroke-width="1"/><rect x="16" y="17" width="7" height="6.5" fill="#b8d0e8" stroke="#222" stroke-width="1"/><path d="M9 7L4.5 17M14 4L19.5 8V17" fill="none" stroke="#222" stroke-width=".9"/></svg>
<svg style="left:16px;top:865px" width="24" height="24" viewBox="0 0 24 24"><path d="M14.5 14.5L22 22" stroke="#333" stroke-width="4.5" stroke-linecap="round"/><path d="M15 15L21.5 21.5" stroke="#f0b020" stroke-width="2.6" stroke-linecap="round"/><circle cx="9" cy="9" r="7.3" fill="#e0ecf8" stroke="#333" stroke-width="1.4"/></svg>
<svg style="left:16px;top:899px" width="24" height="24" viewBox="0 0 24 24"><path d="M2.5 7L12 1L22 17L12.5 23Z" fill="#f8d4bc" stroke="#222" stroke-width="1.1"/><path d="M5 9L7 8M6.5 11.5L9.5 9.5M8 14L10 13M9.5 16.5L12.5 14.5M11 19L13 18" stroke="#333" stroke-width=".8"/></svg>
<div class="a" style="left:55px;top:142px;width:17px;height:17px;background:#f7f6f4;border:1px solid #e2dfdb;border-radius:4px"></div>
<svg style="left:56px;top:142px" width="16" height="16" viewBox="0 0 16 16"><path d="M4.5 8V5.5Q4.5 2 8 2Q11.5 2 11.5 5.5V8" fill="none" stroke="#222" stroke-width="1.4"/><rect x="3" y="7.5" width="10" height="7" rx="1" fill="#f5c020" stroke="#222" stroke-width=".9"/><circle cx="8" cy="10.5" r="1.1" fill="#222"/><path d="M8 11V13" stroke="#222" stroke-width="1"/></svg>
<svg style="left:67px;top:159px" width="8" height="8" viewBox="0 0 8 8"><path d="M0.5 0H5.5L1 5.5Z" fill="#2e3436"/></svg>
<div class="t" style="left:751px;top:114px;font-size:12px;color:#333">B:</div>
<div class="spin" style="left:765px;top:103px;width:121px;height:34px"></div>
<div class="a" style="left:851px;top:104px;width:1px;height:32px;background:#e8e4e0"></div>
<div class="a" style="left:868px;top:104px;width:1px;height:32px;background:#e8e4e0"></div>
<div class="t" style="left:767px;top:113px;font-size:13.7px;color:#111">150,000</div>
<div class="a" style="left:854px;top:119px;width:11px;height:1.5px;background:#333"></div>
<div class="a" style="left:871px;top:119px;width:11px;height:1.5px;background:#333"></div><div class="a" style="left:876px;top:114px;width:1.5px;height:11px;background:#333"></div>
<svg style="left:900px;top:111px" width="16" height="16" viewBox="0 0 16 16"><path d="M3.5 8V5Q3.5 1.5 7 1.5Q10 1.5 10.5 4" fill="none" stroke="#222" stroke-width="1.3"/><path d="M2 8.5L11 7L13 14L4 15.5Z" fill="#f8e070" stroke="#222" stroke-width=".9"/><circle cx="7.5" cy="11" r="1" fill="#222"/></svg>
<div class="t" style="left:930px;top:114px;font-size:12px;color:#333">H:</div>
<div class="spin" style="left:945px;top:103px;width:122px;height:34px"></div>
<div class="a" style="left:1032px;top:104px;width:1px;height:32px;background:#e8e4e0"></div>
<div class="a" style="left:1049px;top:104px;width:1px;height:32px;background:#e8e4e0"></div>
<div class="t" style="left:948px;top:113px;font-size:13.7px;color:#111">150,000</div>
<div class="a" style="left:1035px;top:119px;width:11px;height:1.5px;background:#333"></div>
<div class="a" style="left:1052px;top:119px;width:11px;height:1.5px;background:#333"></div><div class="a" style="left:1057px;top:114px;width:1.5px;height:11px;background:#333"></div>
<div class="a" style="left:1071px;top:103px;width:60px;height:34px;background:#f0eeeb;border:1px solid #cfcac5;border-radius:5px"></div>
<div class="t" style="left:1083px;top:114px;font-size:12px;color:#333">mm</div>
<div class="a" style="left:1108px;top:118px;width:0;height:0;border-left:5px solid transparent;border-right:5px solid transparent;border-top:5px solid #333"></div>
<div class="btn" style="left:1146px;top:103px;width:36px;height:34px"></div>
<div class="btn" style="left:1183px;top:103px;width:36px;height:34px"></div>
<div class="btn" style="left:1220px;top:103px;width:36px;height:34px"></div>
<div class="btn" style="left:1257px;top:103px;width:36px;height:34px"></div>
<svg style="left:1155px;top:111px" width="18" height="18" viewBox="0 0 18 18"><path d="M0.8 1.2H17V9H14.8V3.4H0.8Z" fill="#000"/><path d="M0.8 5.6H11.6V9.2H9.6V7.6H0.8Z" fill="#222"/><path d="M3.5 13.8H13.5" stroke="#000" stroke-width="1.3" stroke-dasharray="1.6 1.1"/><path d="M12.8 10.6L17 13.8L12.8 17Z" fill="#000"/></svg>
<svg style="left:1192px;top:111px" width="18" height="18" viewBox="0 0 18 18"><path d="M0.8 1.8H9.5Q16.2 1.8 16.2 9" fill="none" stroke="#000" stroke-width="1.4"/><path d="M0.8 5.9H8Q11.8 5.9 11.8 9.2" fill="none" stroke="#000" stroke-width="1.4"/><path d="M3.5 13.8H13.5" stroke="#000" stroke-width="1.3" stroke-dasharray="1.6 1.1"/><path d="M12.8 10.6L17 13.8L12.8 17Z" fill="#000"/></svg>
<svg style="left:1229px;top:111px" width="18" height="18" viewBox="0 0 18 18"><defs><linearGradient id="gtg" x1="0" y1="0" x2="0" y2="1"><stop offset="0" stop-color="#dfeaf6"/><stop offset="1" stop-color="#8fb2d8"/></linearGradient></defs><rect x="0.8" y="1.2" width="14.8" height="8" fill="url(#gtg)"/><path d="M0.8 1.2H17V9H14.8V3.4H0.8Z" fill="#000"/><path d="M0.8 5.6H11.6V9.2H9.6V7.6H0.8Z" fill="#222"/><path d="M3.5 13.8H13.5" stroke="#000" stroke-width="1.3" stroke-dasharray="1.6 1.1"/><path d="M12.8 10.6L17 13.8L12.8 17Z" fill="#000"/></svg>
<svg style="left:1266px;top:111px" width="18" height="18" viewBox="0 0 18 18"><path d="M0.8 1.2H16.8V9H0.8Z" fill="#000"/><path d="M0.8 3.3H14.6V7H0.8Z" fill="#fff"/><path d="M2 5.1L4 3.1L6 5.1L4 7.1ZM6.5 5.1L8.5 3.1L10.5 5.1L8.5 7.1ZM11 5.1L13 3.1L15 5.1L13 7.1Z" fill="#000"/><path d="M3.5 13.8H13.5" stroke="#000" stroke-width="1.3" stroke-dasharray="1.6 1.1"/><path d="M12.8 10.6L17 13.8L12.8 17Z" fill="#000"/></svg>
<svg style="left:0;top:0" width="1355" height="1004"><circle cx="226" cy="369.5" r="98.6" fill="none" stroke="#111" stroke-width="2"/><rect x="126.5" y="270.5" width="199" height="198" fill="none" stroke="#4848e0" stroke-width="1" stroke-dasharray="4 4" stroke-dashoffset="-1"/></svg>
<svg style="left:0;top:0" width="1355" height="1004"><path transform="translate(225.5 264) " d="M0 -6.4L4.9 -1.9H1.8V1.9H4.9L0 6.4L-4.9 1.9H-1.8V-1.9H-4.9Z" fill="#000"/></svg>
<svg style="left:0;top:0" width="1355" height="1004"><path transform="translate(225.5 474.5) " d="M0 -6.4L4.9 -1.9H1.8V1.9H4.9L0 6.4L-4.9 1.9H-1.8V-1.9H-4.9Z" fill="#000"/></svg>
<svg style="left:0;top:0" width="1355" height="1004"><path transform="translate(120.2 369.5) rotate(90)" d="M0 -6.4L4.9 -1.9H1.8V1.9H4.9L0 6.4L-4.9 1.9H-1.8V-1.9H-4.9Z" fill="#000"/></svg>
<svg style="left:0;top:0" width="1355" height="1004"><path transform="translate(331.8 369.5) rotate(90)" d="M0 -6.4L4.9 -1.9H1.8V1.9H4.9L0 6.4L-4.9 1.9H-1.8V-1.9H-4.9Z" fill="#000"/></svg>
<svg style="left:0;top:0" width="1355" height="1004"><path transform="translate(115 259) " d="M0 0H7L4.9 2.1L8.9 6.1L11 4V11H4L6.1 8.9L2.1 4.9L0 7Z" fill="#000"/></svg>
<svg style="left:0;top:0" width="1355" height="1004"><path transform="translate(337 259) scale(-1 1)" d="M0 0H7L4.9 2.1L8.9 6.1L11 4V11H4L6.1 8.9L2.1 4.9L0 7Z" fill="#000"/></svg>
<svg style="left:0;top:0" width="1355" height="1004"><path transform="translate(115 479.5) scale(1 -1)" d="M0 0H7L4.9 2.1L8.9 6.1L11 4V11H4L6.1 8.9L2.1 4.9L0 7Z" fill="#000"/></svg>
<svg style="left:0;top:0" width="1355" height="1004"><path transform="translate(337 479.5) scale(-1 -1)" d="M0 0H7L4.9 2.1L8.9 6.1L11 4V11H4L6.1 8.9L2.1 4.9L0 7Z" fill="#000"/></svg>
<div class="t" style="left:5px;top:968px;font-size:12.4px;color:#2e3436">Füllung: <i>Keine</i></div>
<div class="t" style="left:5px;top:985px;font-size:12.4px;color:#2e3436">Kontur:</div>
<div class="a" style="left:52px;top:983px;width:32px;height:16px;background:#000;border-radius:3px"></div>
<div class="t" style="left:88px;top:984px;font-size:13.7px;color:#2e3436">1,15</div>
<div class="t" style="left:118px;top:976px;font-size:13.3px;color:#2e3436">O:</div>
<div class="spin" style="left:133px;top:967px;width:67px;height:32px"></div>
<div class="a" style="left:165px;top:968px;width:1px;height:30px;background:#e8e4e0"></div><div class="a" style="left:182px;top:968px;width:1px;height:30px;background:#e8e4e0"></div>
<div class="t" style="left:135px;top:975px;font-size:14.2px;color:#111">100</div>
<div class="a" style="left:169px;top:982px;width:10px;height:1.5px;background:#333"></div>
<div class="a" style="left:186px;top:982px;width:10px;height:1.5px;background:#bbb"></div><div class="a" style="left:190px;top:977px;width:1.5px;height:11px;background:#bbb"></div>
<div class="a" style="left:202px;top:968px;width:1px;height:30px;background:#dcd8d3"></div>
<svg style="left:213px;top:974px" width="18" height="16" viewBox="0 0 18 16"><path d="M1.5 9.5Q9 1.5 16.5 9.5Q9 16.5 1.5 9.5Z" fill="#fff" stroke="#111" stroke-width="1.3"/><circle cx="9" cy="9.3" r="3.3" fill="#111"/><circle cx="8" cy="8.3" r=".9" fill="#fff"/><path d="M9 5V0.5M5.5 5.8L3.5 1.8M12.5 5.8L14.5 1.8M3 7.3L0.5 5M15 7.3L17.5 5" stroke="#111" stroke-width="1.1"/></svg>
<svg style="left:251px;top:974px" width="16" height="18" viewBox="0 0 16 18"><path d="M2.5 8.5L11 6.5L13 14L4.5 16Z" fill="#f4e070" stroke="#222" stroke-width="1"/><path d="M8 5.5Q7 1.5 10 0.8Q13 0.5 13.5 4L14 7.5" fill="none" stroke="#222" stroke-width="1.3"/><circle cx="7.6" cy="10.7" r="1.1" fill="#222"/><path d="M7.8 11L8.2 13" stroke="#222" stroke-width="1.1"/></svg>
<div class="a" style="left:276px;top:967px;width:82px;height:32px;background:#f0eeeb;border:1px solid #d3cec9;border-radius:5px"></div>
<div class="t" style="left:288px;top:978px;font-size:10.5px;color:#222">•<b>Ebene 1</b></div>
<div class="a" style="left:335px;top:981px;width:0;height:0;border-left:5px solid transparent;border-right:5px solid transparent;border-top:5px solid #333"></div>
<div class="t" style="left:359px;top:976px;font-size:13.7px;color:#2e3436"><b>Pfad</b> 4 Knoten in Ebene <b>Ebene 1</b>. Klicken Sie auf die Auswahl, um zwischen Skalieren und Rotieren umzuschalten.</div>
<div class="a" style="left:393px;top:486px;width:354px;height:7px;background:rgba(0,0,0,.07);filter:blur(2px)"></div>
<div class="a" style="left:391px;top:56px;width:358px;height:435px;background:#fff;border:1px solid #c0c0c0"></div>
<div class="a" style="left:392px;top:105px;width:356px;height:1px;background:#dcdcdc"></div>
<div class="it dis" style="left:423px;top:63px">Vorherige Erweiterungen</div>
<div class="it dis" style="left:423px;top:87px">Vorherige Erweiterungseinstellungen<span style="letter-spacing:-0.6px">...</span></div>
<div class="it dis" style="left:709px;top:63px">Alt+Q</div>
<div class="it dis" style="left:652px;top:87px">Umschalt+Alt+Q</div>
<div class="it" style="left:423px;top:112px">Anordnen</div>
<div class="arr" style="left:732px;top:113px"></div>
<div class="it" style="left:423px;top:136px">Aus Pfad erzeugen</div>
<div class="arr" style="left:732px;top:137px"></div>
<div class="it" style="left:423px;top:160px">Bilder</div>
<div class="arr" style="left:732px;top:161px"></div>
<div class="it" style="left:423px;top:184px">Dokument</div>
<div class="arr" style="left:732px;top:185px"></div>
<div class="it" style="left:423px;top:208px">Exportieren</div>
<div class="arr" style="left:732px;top:209px"></div>
<div class="it" style="left:423px;top:232px">Farbe</div>
<div class="arr" style="left:732px;top:233px"></div>
<div class="it" style="left:423px;top:256px">Formatvorlage</div>
<div class="arr" style="left:732px;top:257px"></div>
<div class="a" style="left:392px;top:274px;width:353px;height:24px;background:#3584e0"></div>
<div class="it" style="left:423px;top:280px;color:#fff">Gcode-Werkzeuge</div>
<div class="arr" style="left:732px;top:281px;border-left-color:#fff"></div>
<div class="it" style="left:423px;top:304px">Internet</div>
<div class="arr" style="left:732px;top:305px"></div>
<div class="it" style="left:423px;top:328px">JessyInk</div>
<div class="arr" style="left:732px;top:329px"></div>
<div class="it" style="left:423px;top:352px">Pfad modifizieren</div>
<div class="arr" style="left:732px;top:353px"></div>
<div class="it" style="left:423px;top:376px">Pfad visualisieren</div>
<div class="arr" style="left:732px;top:377px"></div>
<div class="it" style="left:423px;top:400px">Raster</div>
<div class="arr" style="left:732px;top:401px"></div>
<div class="it" style="left:423px;top:424px">Rendern</div>
<div class="arr" style="left:732px;top:425px"></div>
<div class="it" style="left:423px;top:448px">Text</div>
<div class="arr" style="left:732px;top:449px"></div>
<div class="it" style="left:423px;top:472px">Typografie</div>
<div class="arr" style="left:732px;top:473px"></div>
<div class="a" style="left:745px;top:272px;width:335px;height:251px;border:2px solid #2f7de0;background:#fff"></div>
<div class="a" style="left:747px;top:274px;width:329px;height:241px;border-right:1px solid #c4c4c4;border-bottom:1px solid #c4c4c4;background:#fff"></div>
<div class="a" style="left:749px;top:516px;width:326px;height:4px;background:linear-gradient(rgba(0,0,0,.06),rgba(0,0,0,0))"></div>
<div class="it" style="left:777px;top:280px">Drehbank<span style="letter-spacing:-0.6px">...</span></div>
<div class="it" style="left:777px;top:304px">DXF-Punkte<span style="letter-spacing:-0.6px">...</span></div>
<div class="it" style="left:777px;top:328px">Fläche<span style="letter-spacing:-0.6px">...</span></div>
<div class="it" style="left:777px;top:352px">Graffiti<span style="letter-spacing:-0.6px">...</span></div>
<div class="it" style="left:777px;top:376px">Gravur<span style="letter-spacing:-0.6px">...</span></div>
<div class="it" style="left:777px;top:400px">Orientierungspunkte<span style="letter-spacing:-0.6px">...</span></div>
<div class="it" style="left:777px;top:424px">Pfad für Plasma- oder Laserschneider vorbereiten<span style="letter-spacing:-0.6px">...</span></div>
<div class="it" style="left:777px;top:448px">Pfad zu GCode<span style="letter-spacing:-0.6px">...</span></div>
<div class="it" style="left:777px;top:472px">Über<span style="letter-spacing:-0.6px">...</span></div>
<div class="it" style="left:777px;top:496px">Werkzeugbibliothek<span style="letter-spacing:-0.6px">...</span></div>
</body></html>
